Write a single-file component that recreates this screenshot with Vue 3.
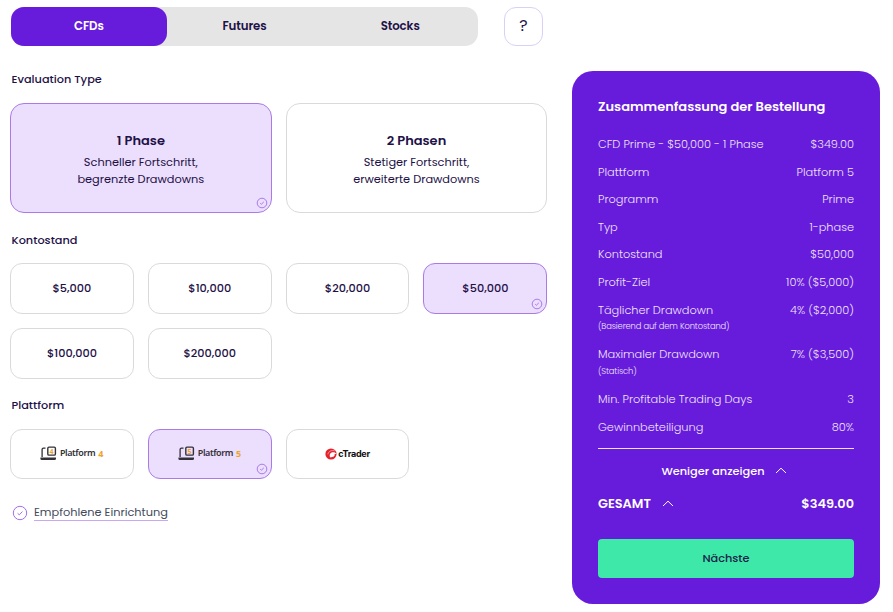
<script setup>
import { ref } from 'vue'

const markets = ['CFDs', 'Futures', 'Stocks']
const market = ref('CFDs')

const phases = [
  { id: 1, title: '1 Phase', lines: ['Schneller Fortschritt,', 'begrenzte Drawdowns'] },
  { id: 2, title: '2 Phasen', lines: ['Stetiger Fortschritt,', 'erweiterte Drawdowns'] },
]
const phase = ref(1)

const balances = ['$5,000', '$10,000', '$20,000', '$50,000', '$100,000', '$200,000']
const balance = ref('$50,000')

const platforms = ['4', '5', 'cTrader']
const platform = ref('5')

const rows = [
  { label: 'CFD Prime - $50,000 - 1 Phase', value: '$349.00' },
  { label: 'Plattform', value: 'Platform 5' },
  { label: 'Programm', value: 'Prime' },
  { label: 'Typ', value: '1-phase' },
  { label: 'Kontostand', value: '$50,000' },
  { label: 'Profit-Ziel', value: '10% ($5,000)' },
  { label: 'Täglicher Drawdown', note: '(Basierend auf dem Kontostand)', value: '4% ($2,000)' },
  { label: 'Maximaler Drawdown', note: '(Statisch)', value: '7% ($3,500)' },
  { label: 'Min. Profitable Trading Days', value: '3' },
  { label: 'Gewinnbeteiligung', value: '80%' },
]
</script>

<template>
  <main class="checkout">
    <section class="config">
      <div class="config__top">
        <div class="tabs">
          <button
            v-for="m in markets"
            :key="m"
            class="tabs__item"
            :class="{ 'tabs__item--active': m === market }"
            @click="market = m"
          >
            {{ m }}
          </button>
        </div>
        <button class="help">?</button>
      </div>

      <h2 class="config__label">Evaluation Type</h2>
      <div class="phases">
        <button
          v-for="p in phases"
          :key="p.id"
          class="option option--phase"
          :class="{ 'option--active': p.id === phase }"
          @click="phase = p.id"
        >
          <strong class="option__title">{{ p.title }}</strong>
          <span v-for="line in p.lines" :key="line" class="option__line">{{ line }}</span>
          <svg v-if="p.id === phase" class="option__check" viewBox="0 0 12 12">
            <circle cx="6" cy="6" r="4.8" />
            <path d="M4.2 6.2 5.4 7.2 7.8 4.9" />
          </svg>
        </button>
      </div>

      <h2 class="config__label config__label--balance">Kontostand</h2>
      <div class="options">
        <button
          v-for="b in balances"
          :key="b"
          class="option"
          :class="{ 'option--active': b === balance }"
          @click="balance = b"
        >
          {{ b }}
          <svg v-if="b === balance" class="option__check" viewBox="0 0 12 12">
            <circle cx="6" cy="6" r="4.8" />
            <path d="M4.2 6.2 5.4 7.2 7.8 4.9" />
          </svg>
        </button>
      </div>

      <h2 class="config__label config__label--platform">Plattform</h2>
      <div class="options">
        <button
          v-for="p in platforms"
          :key="p"
          class="option option--platform"
          :class="{ 'option--active': p === platform }"
          @click="platform = p"
        >
          <span v-if="p === 'cTrader'" class="ctrader">
            <svg class="ctrader__icon" viewBox="0 0 12 12">
              <circle cx="6" cy="6" r="5.6" fill="#e5212b" />
              <path
                d="M9.8 2.900C7 1.800 3.300 3.200 2.900 6.300"
                fill="none"
                stroke="#fff"
                stroke-width="0.5"
              />
              <path d="M5.400 9.600C4 7.400 5 4.700 7.400 4.300c1.700-.3 3.200.3 4.300 1.500L9.600 5.900c.3 1-.1 1.900-.9 2.500C7.900 8.900 6.600 8.900 5.400 9.600Z" fill="#fff" />
            </svg>
            <span class="ctrader__name">cTrader</span>
          </span>
          <span v-else class="mt">
            <svg class="mt__icon" viewBox="0 0 17 15">
              <path d="M2.100 11V3.600Q2.100 2.200 3.500 2.200H5.500" fill="none" stroke="#333038" stroke-width="1.300" />
              <rect x="7.800" y="1.100" width="7.600" height="8" rx="1.200" fill="none" stroke="#333038" stroke-width="1.400" />
              <path d="M.4 11.600H16v1.200q0 1.200-1.400 1.200H1.800Q.4 14 .4 12.800Z" fill="#333038" />
              <text x="11.600" y="7.800" text-anchor="middle" class="mt__digit">{{ p }}</text>
            </svg>
            <span class="mt__name">Platform</span>
            <span class="mt__version">{{ p }}</span>
          </span>
          <svg v-if="p === platform" class="option__check" viewBox="0 0 12 12">
            <circle cx="6" cy="6" r="4.8" />
            <path d="M4.2 6.2 5.4 7.2 7.8 4.9" />
          </svg>
        </button>
      </div>

      <div class="recommended">
        <svg class="recommended__icon" viewBox="0 0 16 16">
          <circle cx="8" cy="8" r="6.700" />
          <path d="M5.600 8.300 7.300 9.800 10.400 6.600" />
        </svg>
        <a class="recommended__link">Empfohlene Einrichtung</a>
      </div>
    </section>

    <aside class="summary">
      <h2 class="summary__title">Zusammenfassung der Bestellung</h2>
      <dl class="summary__rows">
        <div v-for="row in rows" :key="row.label" class="summary__row">
          <dt>
            <span>{{ row.label }}</span>
            <small v-if="row.note">{{ row.note }}</small>
          </dt>
          <dd>{{ row.value }}</dd>
        </div>
      </dl>
      <button class="summary__toggle">
        <span>Weniger anzeigen</span>
        <svg class="chevron" viewBox="0 0 12 7"><path d="M1 6 6 1.200 11 6" /></svg>
      </button>
      <div class="summary__total">
        <span class="summary__total-label">GESAMT</span>
        <svg class="chevron" viewBox="0 0 12 7"><path d="M1 6 6 1.200 11 6" /></svg>
        <span class="summary__total-value">$349.00</span>
      </div>
      <button class="summary__next">Nächste</button>
    </aside>
  </main>
</template>

<style>
body {
  margin: 0;
  background: #fff;
}
</style>

<style scoped>
.checkout {
  display: flex;
  align-items: flex-start;
  gap: 24.7px;
  width: 893px;
  height: 612px;
  padding: 7px 13px 0 10px;
  box-sizing: border-box;
  overflow: hidden;
  color: #1e1147;
  font-family: Poppins, Inter, 'Open Sans', sans-serif;
  font-size: 11px;
}

button {
  padding: 0;
  border: 0;
  background: none;
  color: inherit;
  font: inherit;
  cursor: pointer;
}

.config {
  width: 537.3px;
}

.config__top {
  display: flex;
  gap: 26px;
  padding-left: 1px;
}

.tabs {
  display: flex;
  width: 467px;
  height: 39px;
  border-radius: 13px;
  background: #e5e5e5;
}

.tabs__item {
  flex: 1;
  padding-bottom: 1px;
  border-radius: 13px;
  font-size: 11.8px;
  font-weight: 600;
  letter-spacing: -0.1px;
}

.tabs__item--active {
  background: #671bdb;
  color: #fff;
}

.help {
  width: 39px;
  height: 39px;
  padding-bottom: 2px;
  border: 1px solid #d9d0f8;
  border-radius: 12px;
  font-size: 16px;
}

.config__label {
  margin: 24px 0 15px 1.5px;
  font-size: 11.3px;
  font-weight: 500;
  line-height: 18px;
}

.config__label--balance {
  margin: 18px 0 14px 1.5px;
}

.config__label--platform {
  margin: 17px 0 15px 1.5px;
}

.phases {
  display: grid;
  grid-template-columns: 1fr 1fr;
  gap: 14px;
}

.options {
  display: grid;
  grid-template-columns: repeat(4, 1fr);
  gap: 14px;
}

.option {
  position: relative;
  display: flex;
  flex-direction: column;
  align-items: center;
  justify-content: center;
  height: 51px;
  border: 1px solid #dadada;
  border-radius: 12px;
  font-size: 11.3px;
  font-weight: 500;
}

.option--phase {
  height: 110px;
  border-radius: 14px;
  font-size: 11.35px;
  font-weight: 400;
}

.option--platform {
  height: 50px;
}

.option--active {
  border-color: #aa7be6;
  background: #ecdefd;
}

.option__title {
  margin: 4px 0 4px;
  font-size: 13px;
  font-weight: 600;
  line-height: 18px;
}

.option__line {
  line-height: 17px;
}

.option__check {
  position: absolute;
  right: 3px;
  bottom: 3px;
  width: 12px;
  height: 12px;
  fill: none;
  stroke: #a36ee8;
  stroke-width: 0.9;
}

.mt {
  display: flex;
  align-items: center;
  margin-bottom: 2px;
}

.mt__icon {
  width: 17px;
  height: 15px;
}

.mt__digit {
  fill: #eda42b;
  font: 700 7px 'Open Sans', sans-serif;
}

.mt__name {
  margin-left: 2.5px;
  color: #333038;
  font: 600 9px/14px 'Noto Sans', sans-serif;
  letter-spacing: -0.4px;
}

.mt__version {
  margin-left: 3px;
  padding-top: 2px;
  color: #eda42b;
  font: 700 9px/14px 'Noto Sans', sans-serif;
}

.ctrader {
  display: flex;
  align-items: center;
}

.ctrader__icon {
  width: 12px;
  height: 12px;
}

.ctrader__name {
  margin-left: 1px;
  color: #111;
  font: 700 9px/14px Inter, sans-serif;
  letter-spacing: -0.3px;
}

.recommended {
  display: flex;
  align-items: center;
  margin: 24px 0 0 1.5px;
}

.recommended__icon {
  width: 16px;
  height: 16px;
  margin: 1px 6.5px 0 0;
  fill: none;
  stroke: #a56deb;
  stroke-width: 1;
}

.recommended__link {
  padding-top: 1px;
  border-bottom: 1px solid #c8a8f2;
  color: #454a5d;
  font-size: 11.35px;
  line-height: 16px;
}

.summary {
  width: 308px;
  height: 533px;
  margin-top: 64px;
  padding: 26px;
  box-sizing: border-box;
  border-radius: 21px;
  background: #671bdb;
  color: #fff;
}

.summary__title {
  margin: 0;
  font-size: 13px;
  font-weight: 600;
  line-height: 20px;
}

.summary__rows {
  display: flex;
  flex-direction: column;
  gap: 10px;
  margin: 19px 0 0;
  padding-bottom: 11.2px;
  border-bottom: 1px solid #efe0ef;
  color: #f0e4fc;
  font-size: 11.35px;
  font-weight: 300;
  line-height: 17.6px;
}

.summary__row {
  display: flex;
  justify-content: space-between;
}

.summary__row dt span,
.summary__row small {
  display: block;
}

.summary__row small {
  padding-bottom: 2px;
  font-size: 8.4px;
  line-height: 15.2px;
  letter-spacing: -0.15px;
}

.summary__row dd {
  margin: 0;
}

.summary__toggle {
  display: flex;
  align-items: center;
  justify-content: center;
  gap: 10px;
  width: 100%;
  margin-top: 13px;
  padding-right: 4px;
  font-size: 11.35px;
  font-weight: 500;
  line-height: 18px;
}

.chevron {
  width: 12px;
  height: 7px;
  fill: none;
  stroke: #fff;
  stroke-width: 1;
}

.summary__total {
  display: flex;
  align-items: center;
  gap: 11px;
  margin-top: 14px;
  font-size: 12.9px;
  font-weight: 600;
  line-height: 20px;
}

.summary__total-value {
  margin-left: auto;
}

.summary__next {
  width: 100%;
  height: 39px;
  margin-top: 25px;
  padding-top: 1px;
  border-radius: 4px;
  background: #3de8a9;
  color: #1b2148;
  font-size: 11.3px;
  font-weight: 500;
}
</style>
